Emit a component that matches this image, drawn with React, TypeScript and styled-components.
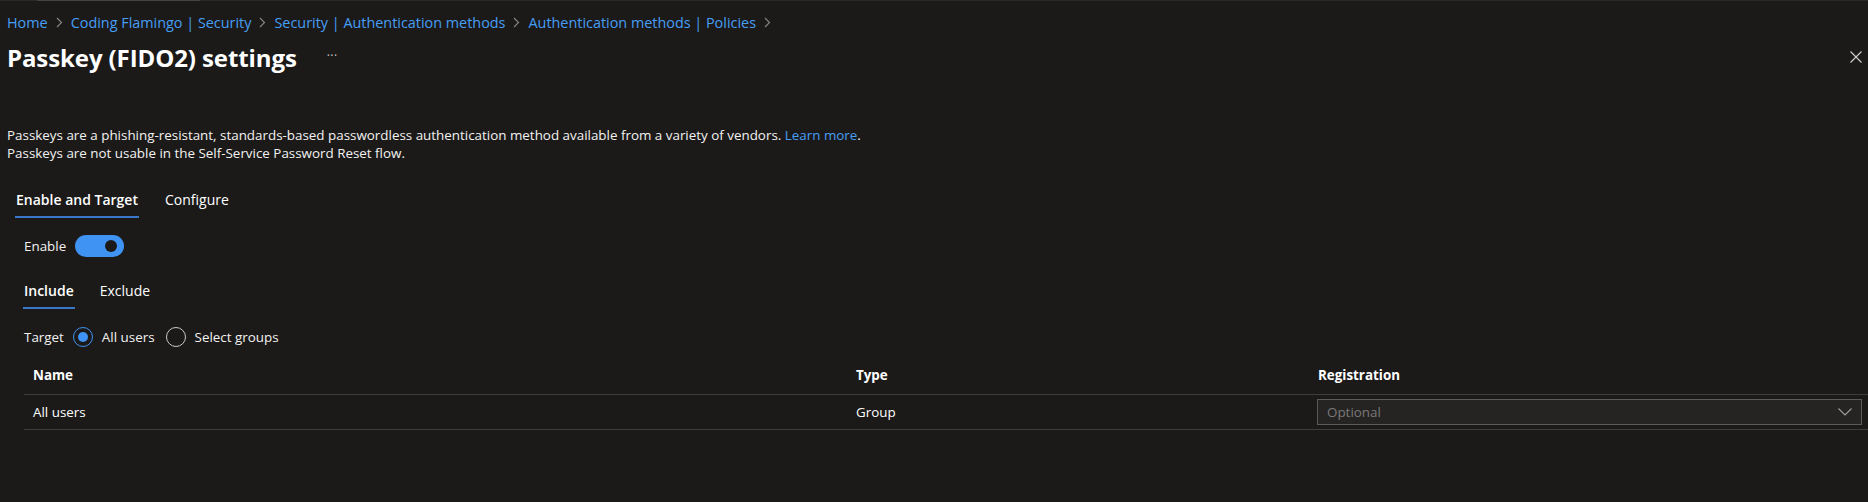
import React from 'react';
import styled, { createGlobalStyle } from 'styled-components';

const GlobalStyle = createGlobalStyle`
  html, body {
    margin : 0;
    padding : 0;
    background-color : #1b1a19;
  }
  body {
    font-family : "Open Sans", "Noto Sans", sans-serif;
    font-size : 13.4px;
    color : #f3f2f1;
  }
  * { box-sizing : border-box; }
`;

const Page = styled.div`
  width : 1868px;
  height : 502px;
  background-color : #1b1a19;
  overflow : hidden;
`;

const TopTrack = styled.div`
  height : 1px;
  background-color : #2a2928;
  position : relative;
`;

const TopThumb = styled.div`
  position : absolute;
  left : 37px;
  top : 0;
  width : 163px;
  height : 1px;
  background-color : #444;
`;

const Header = styled.div`
  padding : 0 6px 0 7px;
`;

const Breadcrumb = styled.nav`
  display : flex;
  align-items : center;
  height : 20px;
  margin-top : 11px;
  gap : 8px;
  font-size : 14.4px;
`;

const Crumb = styled.a`
  color : #479ef5;
  text-decoration : none;
  white-space : nowrap;
`;

const Chevron = styled.svg`
  width : 7px;
  height : 11px;
  stroke : #8a8886;
  fill : none;
  stroke-width : 1.1;
`;

const TitleRow = styled.div`
  display : flex;
  align-items : center;
  justify-content : space-between;
  height : 34px;
  margin-top : 8px;
`;

const TitleGroup = styled.div`
  display : flex;
  align-items : center;
  gap : 30px;
`;

const Title = styled.h1`
  margin : 0;
  font-size : 24px;
  font-weight : 700;
  color : #ffffff;
  letter-spacing : -0.1px;
`;

const More = styled.span`
  color : #c8c6c4;
  font-size : 12px;
  letter-spacing : 0.5px;
  margin-top : -4px;
`;

const CloseIcon = styled.svg`
  width : 12px;
  height : 12px;
  stroke : #d0d0d0;
  stroke-width : 1.1;
`;

const Description = styled.div`
  margin-top : 52px;
  line-height : 18px;
  color : #f3f2f1;
`;

const Link = styled.a`
  color : #479ef5;
  text-decoration : none;
`;

const TabBar = styled.div<{ $indent: number; $gap: number }>`
  display : flex;
  gap : ${p => p.$gap}px;
  margin-left : ${p => p.$indent}px;
`;

const Tab = styled.div<{ $active?: boolean }>`
  line-height : 28px;
  padding : 0 1px 2px;
  font-size : 14px;
  font-weight : ${p => (p.$active ? 600 : 400)};
  color : #ffffff;
  border-bottom : 2px solid ${p => (p.$active ? '#3a77c9' : 'transparent')};
`;

const Section = styled.div`
  padding-left : 24px;
`;

const Row = styled.div<{ $top: number }>`
  display : flex;
  align-items : center;
  margin-top : ${p => p.$top}px;
`;

const Label = styled.span`
  margin-right : 9px;
`;

const Toggle = styled.div`
  width : 49px;
  height : 22px;
  border-radius : 11px;
  background-color : #3f93f2;
  display : flex;
  align-items : center;
  justify-content : flex-end;
  padding-right : 7px;
`;

const Knob = styled.div`
  width : 12px;
  height : 12px;
  border-radius : 50%;
  background-color : #1b1a19;
`;

const Radio = styled.div<{ $checked?: boolean }>`
  width : 20px;
  height : 20px;
  border-radius : 50%;
  border : 1px solid ${p => (p.$checked ? '#3f93f2' : '#c8c8c8')};
  display : flex;
  align-items : center;
  justify-content : center;
  margin-right : 9px;

  &::after {
    content : '';
    width : 10px;
    height : 10px;
    border-radius : 50%;
    background-color : ${p => (p.$checked ? '#3f93f2' : 'transparent')};
  }
`;

const RadioText = styled.span`
  margin-right : 11px;
`;

const Table = styled.div`
  margin-top : 9px;
`;

const TableRow = styled.div<{ $head?: boolean }>`
  display : grid;
  grid-template-columns : 823px 462px 1fr;
  align-items : center;
  height : ${p => (p.$head ? 39 : 35)}px;
  border-bottom : 1px solid #3e3d3c;
  font-weight : ${p => (p.$head ? 700 : 400)};
  color : #ffffff;
`;

const Cell = styled.div`
  padding : 0 9px;
`;

const SelectCell = styled.div`
  padding : 0 6px 0 8px;
`;

const Select = styled.div`
  height : 26px;
  border : 1px solid #5b5a59;
  background-color : #252423;
  display : flex;
  align-items : center;
  justify-content : space-between;
  padding : 0 9px;
  color : #7a7978;
`;

const CaretIcon = styled.svg`
  width : 14px;
  height : 8px;
  stroke : #a0a0a0;
  fill : none;
  stroke-width : 1.1;
`;

const crumbs = [
  'Home',
  'Coding Flamingo | Security',
  'Security | Authentication methods',
  'Authentication methods | Policies',
];

export default function App() {
  return (
    <>
      <GlobalStyle />
      <Page>
        <TopTrack>
          <TopThumb />
        </TopTrack>
        <Header>
          <Breadcrumb>
            {crumbs.map(c => (
              <React.Fragment key={c}>
                <Crumb href="#">{c}</Crumb>
                <Chevron viewBox="0 0 7 11">
                  <polyline points="1,1 5.5,5.5 1,10" />
                </Chevron>
              </React.Fragment>
            ))}
          </Breadcrumb>
          <TitleRow>
            <TitleGroup>
              <Title>Passkey (FIDO2) settings</Title>
              <More>···</More>
            </TitleGroup>
            <CloseIcon viewBox="0 0 12 12">
              <line x1="0.5" y1="0.5" x2="11.5" y2="11.5" />
              <line x1="11.5" y1="0.5" x2="0.5" y2="11.5" />
            </CloseIcon>
          </TitleRow>
          <Description>
            <div>
              Passkeys are a phishing-resistant, standards-based passwordless authentication method available from a variety of vendors. <Link href="#">Learn more</Link>.
            </div>
            <div>Passkeys are not usable in the Self-Service Password Reset flow.</div>
          </Description>
          <Row $top={24}>
            <TabBar $indent={8} $gap={25}>
              <Tab $active>Enable and Target</Tab>
              <Tab>Configure</Tab>
            </TabBar>
          </Row>
        </Header>
        <Section>
          <Row $top={17}>
            <Label>Enable</Label>
            <Toggle>
              <Knob />
            </Toggle>
          </Row>
          <Row $top={20}>
            <TabBar $indent={-1} $gap={24}>
              <Tab $active>Include</Tab>
              <Tab>Exclude</Tab>
            </TabBar>
          </Row>
          <Row $top={18}>
            <Label>Target</Label>
            <Radio $checked />
            <RadioText>All users</RadioText>
            <Radio />
            <RadioText>Select groups</RadioText>
          </Row>
          <Table>
            <TableRow $head>
              <Cell>Name</Cell>
              <Cell>Type</Cell>
              <Cell>Registration</Cell>
            </TableRow>
            <TableRow>
              <Cell>All users</Cell>
              <Cell>Group</Cell>
              <SelectCell>
                <Select>
                  <span>Optional</span>
                  <CaretIcon viewBox="0 0 14 8">
                    <polyline points="0.5,0.5 7,7 13.5,0.5" />
                  </CaretIcon>
                </Select>
              </SelectCell>
            </TableRow>
          </Table>
        </Section>
      </Page>
    </>
  );
}
